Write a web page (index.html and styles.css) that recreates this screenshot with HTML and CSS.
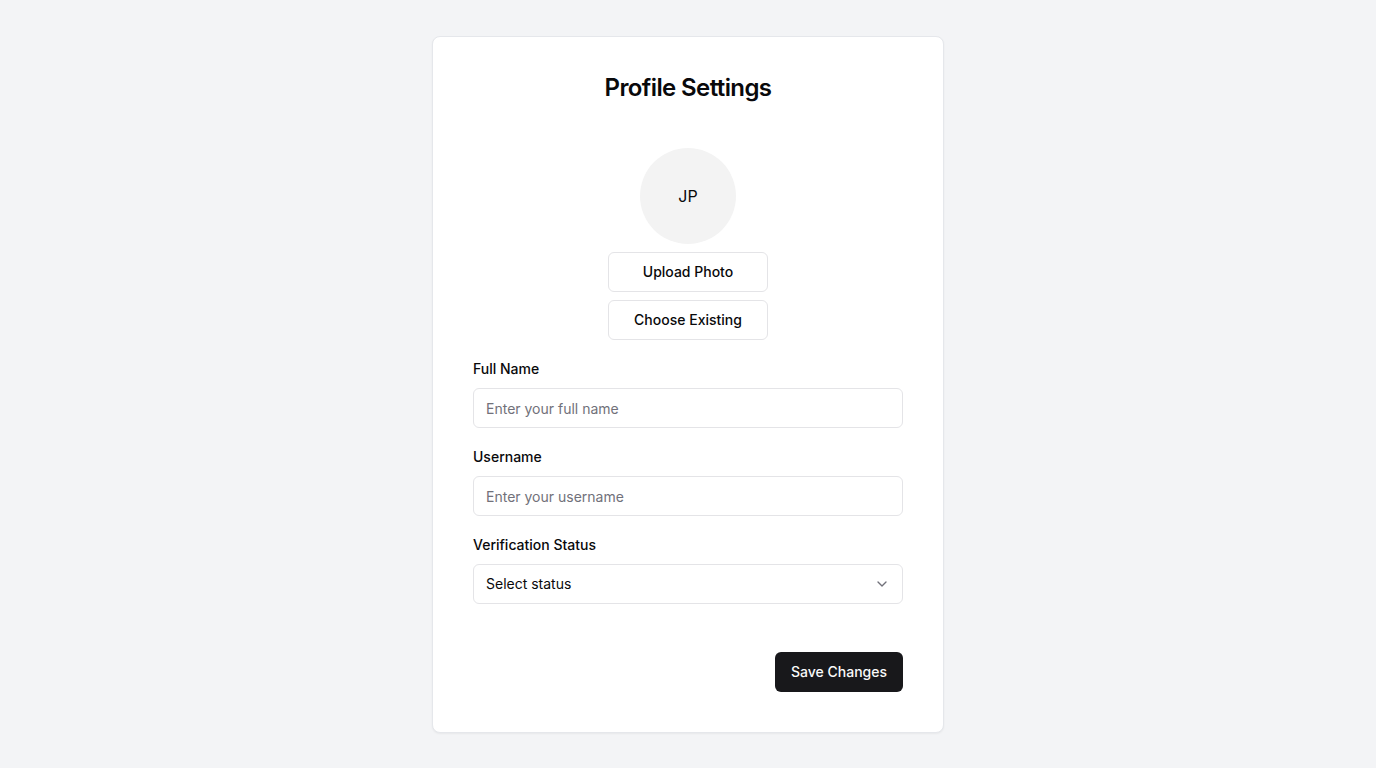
FILE: index.html
```html
<!DOCTYPE html>
<html lang="en">
<head>
    <meta charset="UTF-8">
    <meta name="viewport" content="width=device-width, initial-scale=1.0">
    <title>Profile Settings</title>
    <link rel="stylesheet" href="styles.css">
</head>
<body>
    <div class="card">
        <h1 class="title">Profile Settings</h1>

        <div class="avatar-block">
            <div class="avatar">JP</div>
            <button class="btn-outline">Upload Photo</button>
            <button class="btn-outline">Choose Existing</button>
        </div>

        <div class="field">
            <label for="fullName">Full Name</label>
            <input type="text" id="fullName" placeholder="Enter your full name">
        </div>

        <div class="field">
            <label for="username">Username</label>
            <input type="text" id="username" placeholder="Enter your username">
        </div>

        <div class="field">
            <label>Verification Status</label>
            <div class="select">
                <span>Select status</span>
                <svg width="16" height="16" viewBox="0 0 24 24" fill="none" stroke="currentColor" stroke-width="2" stroke-linecap="round" stroke-linejoin="round"><path d="m6 9 6 6 6-6"/></svg>
            </div>
        </div>

        <div class="actions">
            <button class="btn-primary">Save Changes</button>
        </div>
    </div>
</body>
</html>
```

FILE: styles.css
```css
* {
    box-sizing: border-box;
}
body {
    margin: 0;
    font-family: Inter, "Noto Sans", sans-serif;
    background-color: #f3f4f6;
    color: #09090b;
    display: flex;
    justify-content: center;
    padding-top: 36px;
    min-height: 100vh;
}
.card {
    width: 512px;
    height: 697px;
    background: #fff;
    border: 1px solid #e5e7eb;
    border-radius: 8px;
    box-shadow: 0 1px 2px rgba(0, 0, 0, 0.05);
    padding: 39px 40px;
}
.title {
    margin: 0 0 48px;
    font-size: 24px;
    line-height: 24px;
    font-weight: 600;
    text-align: center;
    letter-spacing: -0.6px;
}
.avatar-block {
    display: flex;
    flex-direction: column;
    align-items: center;
    gap: 8px;
    margin-bottom: 19px;
}
.avatar {
    width: 96px;
    height: 96px;
    border-radius: 50%;
    background: #f3f3f3;
    display: flex;
    align-items: center;
    justify-content: center;
    font-size: 16px;
}
.btn-outline {
    width: 160px;
    height: 40px;
    padding: 0 0 2px;
    background: #fff;
    border: 1px solid #e4e4e7;
    border-radius: 6px;
    font-family: inherit;
    font-size: 14px;
    font-weight: 500;
    color: #09090b;
}
.field {
    display: flex;
    flex-direction: column;
    gap: 9px;
    margin-bottom: 19px;
}
.field label {
    font-size: 14px;
    line-height: 20px;
    font-weight: 500;
}
input[type="text"], .select {
    width: 100%;
    height: 40px;
    padding: 0 12px;
    border: 1px solid #e4e4e7;
    border-radius: 6px;
    font-family: inherit;
    font-size: 14px;
    color: #09090b;
}
input::placeholder {
    color: #71717a;
}
.select {
    display: flex;
    align-items: center;
    justify-content: space-between;
    padding-bottom: 2px;
}
.select svg {
    color: #71717a;
    margin-top: 2px;
}
.actions {
    display: flex;
    justify-content: flex-end;
    margin-top: 48px;
}
.btn-primary {
    width: 128px;
    height: 40px;
    padding: 0 0 2px;
    background: #18181b;
    color: #fafafa;
    border: none;
    border-radius: 6px;
    font-family: inherit;
    font-size: 14px;
    font-weight: 500;
}
```
